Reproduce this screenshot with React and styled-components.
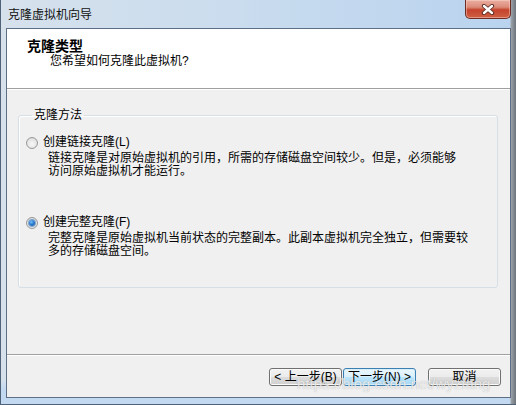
import React from 'react';
import styled, { createGlobalStyle } from 'styled-components';

const Global = createGlobalStyle`
  html, body { margin: 0; padding: 0; background: #ffffff; }
  body {
    font-family: "Liberation Sans", "Noto Sans CJK SC", sans-serif;
    color: #000;
  }
`;

const Window = styled.div`
  position: relative;
  box-sizing: border-box;
  width: 516px;
  height: 405px;
  display: flex;
  flex-direction: column;
  padding: 0 5px 6px 5px;
  border-left: 1px solid #4f6277;
  border-bottom: 1px solid #4f6277;
  background:
    linear-gradient(to right, transparent 509px, #9ca2a8 510px, #6d737a 100%),
    linear-gradient(to bottom, transparent 380px, #c2d9f1 390px),
    linear-gradient(to right, #d6e1ec 0%, #cadcee 45%, #b9d3ef 100%);
`;

const TitleBar = styled.div`
  flex: none;
  height: 28px;
  display: flex;
  align-items: flex-start;
  justify-content: space-between;
`;

const Title = styled.span`
  margin: 8px 0 0 2px;
  font-size: 12px;
  line-height: 14px;
  color: #111;
`;

const CloseButton = styled.div`
  box-sizing: border-box;
  width: 46px;
  height: 19px;
  border: 1px solid #6e2c23;
  border-top: none;
  border-radius: 0 0 5px 5px;
  background: linear-gradient(#eab0a3 0%, #dc8a78 40%, #c5432d 55%, #cf6042 100%);
  box-shadow: inset 0 0 0 1px rgba(255, 220, 210, 0.45);
  display: flex;
  align-items: center;
  justify-content: center;
`;

const Client = styled.div`
  flex: 1;
  display: flex;
  flex-direction: column;
  border: 1px solid #5d6f84;
  background: #f0f0f0;
`;

const Header = styled.div`
  box-sizing: content-box;
  height: 49px;
  padding-top: 10px;
  background: #ffffff;
  border-bottom: 1px solid #a0a0a0;
  box-shadow: 0 1px 0 #ffffff;
`;

const HeaderTitle = styled.div`
  margin-left: 20px;
  font-size: 14px;
  line-height: 15px;
  font-weight: bold;
`;

const HeaderSubtitle = styled.div`
  margin-left: 43px;
  font-size: 12px;
  line-height: 14px;
`;

const Body = styled.div`
  padding: 19px 12px 0 11px;
`;

const GroupBox = styled.fieldset`
  margin: 0;
  min-width: 0;
  padding: 13px 10px 29px 7px;
  border: 1px solid #d5dfe5;
  border-radius: 3px;
  box-shadow: inset 1px 1px 0 #ffffff;
`;

const Legend = styled.legend`
  margin-left: 6px;
  padding: 0 2px;
  font-size: 12px;
  line-height: 14px;
`;

const Option = styled.div`
  display: flex;
  flex-direction: column;
  margin-top: ${(p) => (p.$first ? 0 : 37)}px;
`;

const OptionRow = styled.div`
  display: flex;
  align-items: center;
  gap: 5px;
  font-size: 12px;
  line-height: 15px;
`;

const Radio = styled.span`
  position: relative;
  box-sizing: border-box;
  width: 12px;
  height: 12px;
  border-radius: 50%;
  border: 1px solid #9a9a9a;
  background: radial-gradient(circle at 50% 60%, #f8f8f8 0%, #e6e6e6 55%, #cfcfcf 100%);
  flex: none;

  &::after {
    content: '';
    display: ${(p) => (p.$checked ? 'block' : 'none')};
    position: absolute;
    left: 2px;
    top: 2px;
    width: 6px;
    height: 6px;
    border-radius: 50%;
    background: radial-gradient(circle at 40% 35%, #7fc1f3 0%, #2a7bd0 45%, #1b4f92 100%);
    box-shadow: 0 0 0 1px #7ea6cf;
  }
`;

const Description = styled.div`
  margin: 2px 0 0 22px;
  font-size: 12px;
  line-height: 13px;
`;

const Footer = styled.div`
  margin-top: auto;
  border-top: 1px solid #a0a0a0;
  box-shadow: inset 0 1px 0 #ffffff;
  display: flex;
  justify-content: flex-end;
  padding: 13px 9px 11px 0;
`;

const NavGroup = styled.div`
  display: flex;
  gap: 1px;
  margin-right: 12px;
`;

const Button = styled.div`
  box-sizing: border-box;
  width: 73px;
  height: 18px;
  border-radius: 3px;
  border: 1px solid ${(p) => (p.$default ? '#3c7fb1' : '#707070')};
  background: ${(p) =>
    p.$default
      ? 'linear-gradient(#eaf6fd 0%, #d9f0fc 50%, #bee6fd 50%, #a7d9f5 100%)'
      : 'linear-gradient(#f2f2f2 0%, #ebebeb 50%, #dddddd 50%, #cfcfcf 100%)'};
  box-shadow: inset 0 0 0 1px ${(p) => (p.$default ? '#d8eefb' : '#fbfbfb')};
  display: flex;
  align-items: center;
  justify-content: center;
  font-size: 12px;
  line-height: 14px;
  white-space: nowrap;
`;

const Watermark = styled.div`
  position: absolute;
  left: 296px;
  top: 376px;
  font-family: "Liberation Sans", sans-serif;
  font-size: 15px;
  line-height: 15px;
  color: rgba(252, 252, 252, 0.75);
  text-shadow: 0 0 1px rgba(110, 110, 110, 0.5);
  pointer-events: none;
`;

function CloseIcon() {
  return (
    <svg width="16" height="11" viewBox="0 0 16 11">
      <path d="M4 2 L12 9 M12 2 L4 9" stroke="#5a2a22" strokeWidth="4.2" strokeLinecap="round" />
      <path d="M4 2 L12 9 M12 2 L4 9" stroke="#ffffff" strokeWidth="2.4" strokeLinecap="round" />
    </svg>
  );
}

export default function App() {
  return (
    <>
      <Global />
      <Window>
        <TitleBar>
          <Title>克隆虚拟机向导</Title>
          <CloseButton>
            <CloseIcon />
          </CloseButton>
        </TitleBar>
        <Client>
          <Header>
            <HeaderTitle>克隆类型</HeaderTitle>
            <HeaderSubtitle>您希望如何克隆此虚拟机?</HeaderSubtitle>
          </Header>
          <Body>
            <GroupBox>
              <Legend>克隆方法</Legend>
              <Option $first>
                <OptionRow>
                  <Radio />
                  <span>创建链接克隆(L)</span>
                </OptionRow>
                <Description>
                  链接克隆是对原始虚拟机的引用，所需的存储磁盘空间较少。但是，必须能够
                  <br />
                  访问原始虚拟机才能运行。
                </Description>
              </Option>
              <Option>
                <OptionRow>
                  <Radio $checked />
                  <span>创建完整克隆(F)</span>
                </OptionRow>
                <Description>
                  完整克隆是原始虚拟机当前状态的完整副本。此副本虚拟机完全独立，但需要较
                  <br />
                  多的存储磁盘空间。
                </Description>
              </Option>
            </GroupBox>
          </Body>
          <Footer>
            <NavGroup>
              <Button>&lt; 上一步(B)</Button>
              <Button $default>下一步(N) &gt;</Button>
            </NavGroup>
            <Button>取消</Button>
          </Footer>
        </Client>
        <Watermark>https://blog.csdn.net/wyzfang</Watermark>
      </Window>
    </>
  );
}
